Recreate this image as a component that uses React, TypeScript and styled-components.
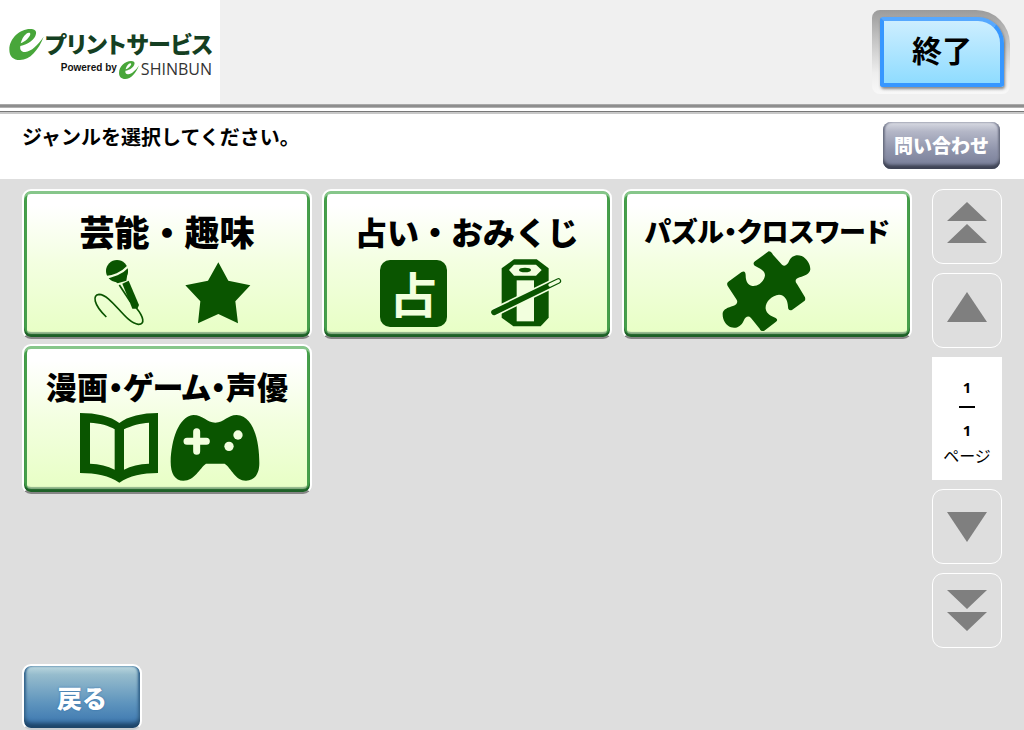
import React from "react";
import styled, { createGlobalStyle, css } from "styled-components";

const GREEN = "#0a5500";
const CREAM = "#f2ffde";

const GlobalStyle = createGlobalStyle`
  *, *::before, *::after { box-sizing: border-box; }
  body {
    margin: 0;
    background: #dedede;
    color: #000;
    font-family: "Noto Sans CJK JP", sans-serif;
  }
  button { font-family: inherit; padding: 0; margin: 0; cursor: pointer; }
  svg { display: block; flex: none; }
`;

const Page = styled.div`
  min-height: 100vh;
  display: flex;
  flex-direction: column;
`;

const Header = styled.header`
  height: 104px;
  display: flex;
  justify-content: space-between;
  background: #f0f0f0;
`;

const Logo = styled.h1`
  margin: 0;
  width: 220px;
  padding: 28px 8px 0 9px;
  background: #fff;
  display: flex;
  flex-direction: column;
  font-weight: 400;
`;

const LogoLine = styled.span<{ $sub?: boolean }>`
  display: flex;
  align-items: center;
  ${(p) =>
    p.$sub
      ? css`
          justify-content: flex-end;
          height: 20px;
          gap: 2px;
        `
      : css`
          height: 32px;
          gap: 1px;
        `}
`;

const LogoName = styled.span`
  font-size: 23px;
  line-height: 30px;
  padding-bottom: 2px;
  font-weight: 900;
  font-feature-settings: "palt";
  color: #153f22;
  white-space: nowrap;
`;

const PoweredBy = styled.span`
  font: bold 10px/20px "Liberation Sans", sans-serif;
  padding-bottom: 4px;
  color: #111;
`;

const Shinbun = styled.span`
  font: 16px/20px "Open Sans", sans-serif;
  padding-bottom: 2px;
  color: #333;
`;

const ExitFrame = styled.div`
  width: 138px;
  height: 84px;
  margin: 10px 14px 0 0;
  padding: 7px 6px 6px 8px;
  border-radius: 8px 34px 8px 8px;
  background: linear-gradient(#9b9b9b, #c4c4c4 35%, #eeeeee 75%, #f8f8f8);
`;

const ExitButton = styled.button`
  width: 100%;
  height: 70px;
  padding-bottom: 6px;
  border: 4px solid #3797ff;
  border-top-color: #56a8ff;
  border-radius: 3px 26px 3px 3px;
  background: linear-gradient(#cdeeff, #8fdcff);
  box-shadow: 1px 2px 3px rgba(0, 0, 0, 0.45);
  color: #000;
  font-size: 30px;
  line-height: 40px;
  font-weight: 700;
`;

const Rule = styled.div`
  height: 10px;
  background: linear-gradient(
    #a8a8a8 0 1px,
    #8e8e8e 1px 3px,
    #b0b0b0 3px 4px,
    #fff 4px 7px,
    #777 7px 8px,
    #c8c8c8 8px 10px
  );
`;

const MessageBar = styled.div`
  height: 65px;
  padding: 8px 24px 0 22px;
  display: flex;
  justify-content: space-between;
  align-items: flex-start;
  background: #fff;
`;

const Message = styled.p`
  margin: 0;
  font-size: 20px;
  line-height: 30px;
  font-weight: 700;
`;

const ContactButton = styled.button`
  width: 117px;
  height: 47px;
  padding-bottom: 2px;
  border: 0;
  border-radius: 8px;
  background: linear-gradient(#d9dbe3, #b4b7c7 20%, #8f94ab 60%, #757b96);
  box-shadow: inset 0 -4px 3px #3f4455, inset 2px 0 2px #85899c, inset -2px 0 2px #85899c;
  color: #fff;
  font-size: 19px;
  line-height: 28px;
  font-weight: 900;
`;

const Body = styled.div`
  flex: 1;
  display: flex;
  padding: 10px 22px 0;
  background: #dedede;
`;

const Main = styled.main`
  flex: 1;
  display: flex;
  flex-direction: column;
`;

const GenreGrid = styled.div`
  display: grid;
  grid-template-columns: repeat(auto-fill, 290px);
  gap: 5px 10px;
`;

const GenreButton = styled.button`
  height: 150px;
  padding: 16px 0 0;
  border: 2px solid #fff;
  border-bottom-color: #858585;
  border-radius: 9px;
  background: linear-gradient(#fff 10%, #f3ffe0 50%, #e7ffc4) padding-box;
  box-shadow: inset 0 3px 0 #86c68a, inset 0 -3px 1px #1d6127, inset 3px 0 0 #469f4b,
    inset -3px 0 0 #469f4b, inset 0 -5px 1px #8fb48a;
  display: flex;
  flex-direction: column;
  align-items: center;
`;

const GenreName = styled.span<{ $size: number; $tight?: boolean }>`
  height: 48px;
  line-height: 48px;
  font-size: ${(p) => p.$size}px;
  font-weight: 900;
  ${(p) => p.$tight && `font-feature-settings: "palt";`}
  white-space: nowrap;
  color: #000;
`;

const GenreArt = styled.span<{ $gap: number; $indent: number }>`
  height: 76px;
  display: flex;
  align-items: center;
  justify-content: center;
  gap: ${(p) => p.$gap}px;
  padding-left: ${(p) => p.$indent}px;
`;

const FortuneSeal = styled.span`
  width: 67px;
  height: 67px;
  border-radius: 10px;
  background: ${GREEN};
  color: ${CREAM};
  font-size: 48px;
  line-height: 64px;
  font-weight: 700;
  text-align: center;
`;

const Pager = styled.nav`
  width: 70px;
  display: flex;
  flex-direction: column;
  gap: 9px;
`;

const PageButton = styled.button<{ $up?: boolean }>`
  height: 75px;
  border: 1px solid #fff;
  border-radius: 11px;
  background: transparent;
  display: flex;
  align-items: center;
  justify-content: center;
  padding-bottom: ${(p) => (p.$up ? 8 : 0)}px;
`;

const PageCount = styled.div`
  height: 123px;
  padding-top: 19px;
  background: #fff;
  display: flex;
  flex-direction: column;
  align-items: center;
`;

const PageNumber = styled.span`
  font: bold 15px/22px "Noto Sans", sans-serif;
`;

const PageBar = styled.span`
  width: 16px;
  height: 2px;
  margin: 8px 0 11px;
  background: #000;
`;

const PageLabel = styled.span`
  font-size: 16px;
  line-height: 28px;
  font-weight: 400;
`;

const BackButton = styled.button`
  width: 120px;
  height: 66px;
  margin-top: auto;
  border: 2px solid #fff;
  border-bottom-color: #c8ccd0;
  border-radius: 9px;
  background: linear-gradient(#bcd8df, #96bccd 14%, #5e94bd 60%, #3873ae) padding-box;
  box-shadow: inset 0 -5px 4px #1d4468, inset 2px 0 2px #4a7fa8, inset -2px 0 2px #4a7fa8;
  color: #fff;
  font-size: 25px;
  line-height: 36px;
  font-weight: 900;
  text-shadow: 0 0 2px #2868a8;
`;

const LeafMark = ({ width, height }: { width: number; height: number }) => (
  <svg width={width} height={height} viewBox="0 0 103 93" aria-hidden="true">
    <path
      fill="#48a63a"
      fillRule="evenodd"
      d="M103 23C88 62 62 93 32 93C12 93 0 82 0 62C0 28 32 0 62 0C76 0 82 6 80 14C77 32 56 46 33 51C31 62 36 70 48 69C66 67 86 48 103 23ZM34 43C48 38 62 24 63 15C63 10 56 10 51 14C42 21 37 32 34 43Z"
    />
  </svg>
);

const MicIcon = () => (
  <svg width="62" height="68" viewBox="204 228 186 204" aria-hidden="true">
    <circle cx="306" cy="264" r="33" fill={GREEN} />
    <path d="M281 284L339 262L334 293L308 301Z" fill={GREEN} />
    <path d="M268 283C292 282 322 270 340 250" fill="none" stroke={CREAM} strokeWidth="7" />
    <path d="M322 302L341 293L372 366L367 377H352Z" fill={GREEN} />
    <path d="M313 306L346 356" stroke={GREEN} strokeWidth="5" />
    <path
      d="M364 375C385 400 392 425 370 424C330 420 290 335 252 334C232 336 235 365 274 402"
      fill="none"
      stroke={GREEN}
      strokeWidth="5"
    />
  </svg>
);

const StarIcon = () => (
  <svg width="66" height="62" viewBox="507 234 198 186" aria-hidden="true">
    <path
      fill={GREEN}
      d="M607 235L637 290L703 304L658 352L666 418L607 390L546 418L553 352L508 304L576 290Z"
    />
  </svg>
);

const LotIcon = () => (
  <svg width="71" height="68" viewBox="525 224 213 204" aria-hidden="true">
    <path fill={GREEN} d="M594 225H662L698 252V400L674 426H592L557 400V252Z" />
    <path fill={CREAM} d="M579 257L594 241H660L677 257L660 274H594Z" />
    <ellipse cx="627" cy="257" rx="18" ry="7" fill={GREEN} />
    <path fill={CREAM} d="M602 288H654V411H602Z" />
    <path d="M534 384L727 290" stroke={CREAM} strokeWidth="27" />
    <path d="M534 384L727 290" stroke={GREEN} strokeWidth="17" strokeLinecap="round" />
    <path d="M702 302L727 290" stroke={CREAM} strokeWidth="10" strokeLinecap="round" />
  </svg>
);

const PuzzleIcon = () => (
  <svg width="88" height="82" viewBox="320 200 264 246" aria-hidden="true" overflow="visible">
    <path
      fill={GREEN}
      d="M457 198C464 198 466 203 470 208L497 238C505 246 514 238 518 228C524 212 540 206 556 212C572 220 582 236 582 252C580 266 566 272 550 276C538 280 534 287 542 296L566 336C568 344 566 346 560 350L527 374C518 376 515 372 515 364C514 344 506 329 488 328C466 330 446 350 448 370C450 386 466 392 478 398C484 402 484 406 478 410L444 436C438 439 432 436 430 430L404 398C396 390 388 394 382 406C374 424 360 430 344 426C328 420 318 402 319 384C320 372 336 366 350 362C362 358 366 350 360 342L334 302C330 294 334 290 340 286L376 260C384 256 388 260 388 270C388 288 394 300 408 302C426 304 444 288 446 270C446 256 430 250 418 243C410 238 410 232 416 228Z"
    />
  </svg>
);

const BookIcon = () => (
  <svg width="78" height="70" viewBox="192 222 234 210" aria-hidden="true">
    <path
      fill={GREEN}
      fillRule="evenodd"
      d="M192 222C240 222 285 232 310 252C335 232 380 222 426 222V402C380 402 340 410 310 431C280 410 240 402 192 402ZM222 251C250 252 280 260 296 271V392C275 381 250 375 222 374ZM324 271C345 260 375 252 399 251V374C370 375 345 381 324 392Z"
    />
  </svg>
);

const GamepadIcon = () => (
  <svg width="90" height="68" viewBox="460 222 270 204" aria-hidden="true">
    <path
      fill={GREEN}
      d="M530 225C560 225 570 248 596 248C622 248 632 225 660 225C710 228 728 300 728 370C728 400 715 422 688 422C655 422 645 385 624 371H568C548 385 535 422 500 422C475 422 462 400 462 365C464 300 485 230 530 225Z"
    />
    <path
      d="M511 304H569M540 275V334"
      stroke={CREAM}
      strokeWidth="21"
      strokeLinecap="round"
    />
    <circle cx="664" cy="285" r="14" fill={CREAM} />
    <circle cx="637" cy="319" r="14" fill={CREAM} />
  </svg>
);

const Triangle = ({ down, double }: { down?: boolean; double?: boolean }) => {
  const up = double ? "M20 0L40 19H0ZM20 22L40 41H0Z" : "M20 0L40 30H0Z";
  const dn = double ? "M0 0H40L20 19ZM0 22H40L20 41Z" : "M0 0H40L20 30Z";
  const h = double ? 41 : 30;
  return (
    <svg width="40" height={h} viewBox={`0 0 40 ${h}`} aria-hidden="true">
      <path fill="#7f7f7f" d={down ? dn : up} />
    </svg>
  );
};

const genres = [
  {
    name: "芸能・趣味",
    size: 35,
    tight: false,
    gap: 40,
    indent: 0,
    art: [<MicIcon key="a" />, <StarIcon key="b" />],
  },
  {
    name: "占い・おみくじ",
    size: 32,
    tight: false,
    gap: 44,
    indent: 8,
    art: [<FortuneSeal key="a">占</FortuneSeal>, <LotIcon key="b" />],
  },
  {
    name: "パズル・クロスワード",
    size: 27,
    tight: true,
    gap: 0,
    indent: 0,
    art: [<PuzzleIcon key="a" />],
  },
  {
    name: "漫画・ゲーム・声優",
    size: 31,
    tight: true,
    gap: 12,
    indent: 6,
    art: [<BookIcon key="a" />, <GamepadIcon key="b" />],
  },
];

export default function App() {
  return (
    <Page>
      <GlobalStyle />
      <Header>
        <Logo>
          <LogoLine>
            <LeafMark width={35} height={31} />
            <LogoName>プリントサービス</LogoName>
          </LogoLine>
          <LogoLine $sub>
            <PoweredBy>Powered by</PoweredBy>
            <LeafMark width={20} height={18} />
            <Shinbun>SHINBUN</Shinbun>
          </LogoLine>
        </Logo>
        <ExitFrame>
          <ExitButton type="button">終了</ExitButton>
        </ExitFrame>
      </Header>
      <Rule />
      <MessageBar>
        <Message>ジャンルを選択してください。</Message>
        <ContactButton type="button">問い合わせ</ContactButton>
      </MessageBar>
      <Body>
        <Main>
          <GenreGrid>
            {genres.map((g) => (
              <GenreButton key={g.name} type="button">
                <GenreName $size={g.size} $tight={g.tight}>
                  {g.name}
                </GenreName>
                <GenreArt $gap={g.gap} $indent={g.indent}>
                  {g.art}
                </GenreArt>
              </GenreButton>
            ))}
          </GenreGrid>
          <BackButton type="button">戻る</BackButton>
        </Main>
        <Pager aria-label="ページ">
          <PageButton type="button" aria-label="最初のページ" $up>
            <Triangle double />
          </PageButton>
          <PageButton type="button" aria-label="前のページ" $up>
            <Triangle />
          </PageButton>
          <PageCount>
            <PageNumber>1</PageNumber>
            <PageBar />
            <PageNumber>1</PageNumber>
            <PageLabel>ページ</PageLabel>
          </PageCount>
          <PageButton type="button" aria-label="次のページ">
            <Triangle down />
          </PageButton>
          <PageButton type="button" aria-label="最後のページ">
            <Triangle down double />
          </PageButton>
        </Pager>
      </Body>
    </Page>
  );
}
